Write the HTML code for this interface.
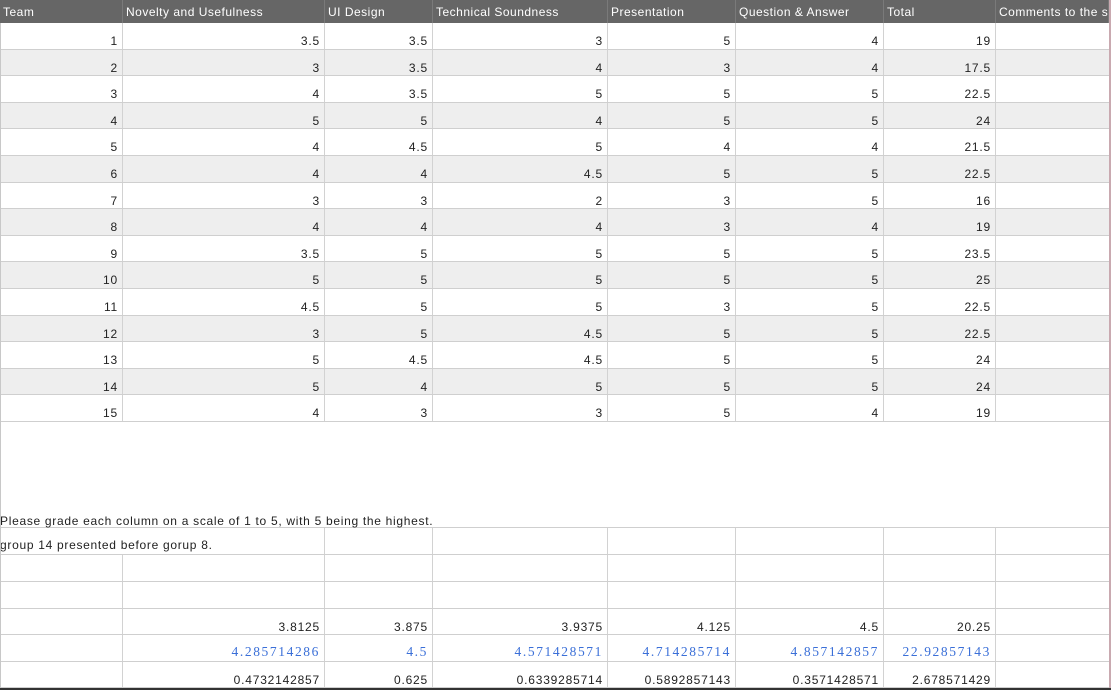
<!DOCTYPE html>
<html><head><meta charset="utf-8"><style>
*{margin:0;padding:0;box-sizing:border-box}
body{width:1111px;height:690px;overflow:hidden;background:#fff;position:relative;font-family:"Liberation Sans",Arial,sans-serif;font-size:12px;letter-spacing:0.8px;color:#222}
.r{position:absolute;left:0;width:1109px;height:26.6px;border-bottom:1px solid #cfcfcf;display:flex}
.r.g{background:#eeeeee}
.c{height:100%;border-right:1px solid #d2d2d2;text-align:right;padding:11px 4px 0 0;line-height:14px;white-space:nowrap;overflow:hidden}
.w0{width:123px}.w1{width:202px}.w2{width:108px}.w3{width:175px}.w4{width:128px}.w5{width:148px}.w6{width:112px}.w7{width:113px;border-right:none}
.h{position:absolute;left:0;top:0;width:1109px;height:23px;background:#666;display:flex;color:#fff}
.h .c{text-align:left;padding:5px 0 0 3px;border-right:1px solid #7a7a7a;font-size:12px;letter-spacing:0.5px}
.b{color:#3a6fd8;font-family:"Liberation Serif","Times New Roman",serif;font-size:13.5px;letter-spacing:1.6px;padding-top:10px}
.t{position:absolute;left:0;line-height:16px;white-space:nowrap;font-size:12px;letter-spacing:0.7px}
</style></head><body>
<div class="h"><div class="c w0">Team</div><div class="c w1">Novelty and Usefulness</div><div class="c w2">UI Design</div><div class="c w3">Technical Soundness</div><div class="c w4">Presentation</div><div class="c w5">Question &amp; Answer</div><div class="c w6">Total</div><div class="c w7">Comments to the s</div></div>

<div class="r" style="top:23px"><div class="c w0">1</div><div class="c w1">3.5</div><div class="c w2">3.5</div><div class="c w3">3</div><div class="c w4">5</div><div class="c w5">4</div><div class="c w6">19</div><div class="c w7"></div></div>
<div class="r g" style="top:49.6px"><div class="c w0">2</div><div class="c w1">3</div><div class="c w2">3.5</div><div class="c w3">4</div><div class="c w4">3</div><div class="c w5">4</div><div class="c w6">17.5</div><div class="c w7"></div></div>
<div class="r" style="top:76.2px"><div class="c w0">3</div><div class="c w1">4</div><div class="c w2">3.5</div><div class="c w3">5</div><div class="c w4">5</div><div class="c w5">5</div><div class="c w6">22.5</div><div class="c w7"></div></div>
<div class="r g" style="top:102.8px"><div class="c w0">4</div><div class="c w1">5</div><div class="c w2">5</div><div class="c w3">4</div><div class="c w4">5</div><div class="c w5">5</div><div class="c w6">24</div><div class="c w7"></div></div>
<div class="r" style="top:129.4px"><div class="c w0">5</div><div class="c w1">4</div><div class="c w2">4.5</div><div class="c w3">5</div><div class="c w4">4</div><div class="c w5">4</div><div class="c w6">21.5</div><div class="c w7"></div></div>
<div class="r g" style="top:156px"><div class="c w0">6</div><div class="c w1">4</div><div class="c w2">4</div><div class="c w3">4.5</div><div class="c w4">5</div><div class="c w5">5</div><div class="c w6">22.5</div><div class="c w7"></div></div>
<div class="r" style="top:182.6px"><div class="c w0">7</div><div class="c w1">3</div><div class="c w2">3</div><div class="c w3">2</div><div class="c w4">3</div><div class="c w5">5</div><div class="c w6">16</div><div class="c w7"></div></div>
<div class="r g" style="top:209.2px"><div class="c w0">8</div><div class="c w1">4</div><div class="c w2">4</div><div class="c w3">4</div><div class="c w4">3</div><div class="c w5">4</div><div class="c w6">19</div><div class="c w7"></div></div>
<div class="r" style="top:235.8px"><div class="c w0">9</div><div class="c w1">3.5</div><div class="c w2">5</div><div class="c w3">5</div><div class="c w4">5</div><div class="c w5">5</div><div class="c w6">23.5</div><div class="c w7"></div></div>
<div class="r g" style="top:262.4px"><div class="c w0">10</div><div class="c w1">5</div><div class="c w2">5</div><div class="c w3">5</div><div class="c w4">5</div><div class="c w5">5</div><div class="c w6">25</div><div class="c w7"></div></div>
<div class="r" style="top:289px"><div class="c w0">11</div><div class="c w1">4.5</div><div class="c w2">5</div><div class="c w3">5</div><div class="c w4">3</div><div class="c w5">5</div><div class="c w6">22.5</div><div class="c w7"></div></div>
<div class="r g" style="top:315.6px"><div class="c w0">12</div><div class="c w1">3</div><div class="c w2">5</div><div class="c w3">4.5</div><div class="c w4">5</div><div class="c w5">5</div><div class="c w6">22.5</div><div class="c w7"></div></div>
<div class="r" style="top:342.2px"><div class="c w0">13</div><div class="c w1">5</div><div class="c w2">4.5</div><div class="c w3">4.5</div><div class="c w4">5</div><div class="c w5">5</div><div class="c w6">24</div><div class="c w7"></div></div>
<div class="r g" style="top:368.8px"><div class="c w0">14</div><div class="c w1">5</div><div class="c w2">4</div><div class="c w3">5</div><div class="c w4">5</div><div class="c w5">5</div><div class="c w6">24</div><div class="c w7"></div></div>
<div class="r" style="top:395.4px"><div class="c w0">15</div><div class="c w1">4</div><div class="c w2">3</div><div class="c w3">3</div><div class="c w4">5</div><div class="c w5">4</div><div class="c w6">19</div><div class="c w7"></div></div>

<div style="position:absolute;left:0;top:422px;width:1109px;height:106px;border-bottom:1px solid #cfcfcf"></div>
<div class="t" style="top:513px">Please grade each column on a scale of 1 to 5, with 5 being the highest.</div>

<div class="r" style="top:528px;height:27px"><div class="c" style="width:325px;text-align:left;padding-left:0;padding-top:10px;border-right:1px solid #d2d2d2;letter-spacing:0.7px">group 14 presented before gorup 8.</div><div class="c w2"></div><div class="c w3"></div><div class="c w4"></div><div class="c w5"></div><div class="c w6"></div><div class="c w7"></div></div>
<div class="r" style="top:555px;height:27px"><div class="c w0"></div><div class="c w1"></div><div class="c w2"></div><div class="c w3"></div><div class="c w4"></div><div class="c w5"></div><div class="c w6"></div><div class="c w7"></div></div>
<div class="r" style="top:582px;height:26.6px"><div class="c w0"></div><div class="c w1"></div><div class="c w2"></div><div class="c w3"></div><div class="c w4"></div><div class="c w5"></div><div class="c w6"></div><div class="c w7"></div></div>
<div class="r" style="top:608.6px"><div class="c w0"></div><div class="c w1">3.8125</div><div class="c w2">3.875</div><div class="c w3">3.9375</div><div class="c w4">4.125</div><div class="c w5">4.5</div><div class="c w6">20.25</div><div class="c w7"></div></div>
<div class="r" style="top:635.2px"><div class="c w0"></div><div class="c w1 b">4.285714286</div><div class="c w2 b">4.5</div><div class="c w3 b">4.571428571</div><div class="c w4 b">4.714285714</div><div class="c w5 b">4.857142857</div><div class="c w6 b">22.92857143</div><div class="c w7"></div></div>
<div class="r" style="top:661.8px;height:26.2px"><div class="c w0"></div><div class="c w1">0.4732142857</div><div class="c w2">0.625</div><div class="c w3">0.6339285714</div><div class="c w4">0.5892857143</div><div class="c w5">0.3571428571</div><div class="c w6">2.678571429</div><div class="c w7"></div></div>

<div style="position:absolute;left:0;top:23px;width:1px;height:665px;background:#c8c8c8"></div>
<div style="position:absolute;left:1109px;top:0;width:2px;height:690px;background:#c9a9b0"></div>
<div style="position:absolute;left:0;top:688px;width:1111px;height:2px;background:#333"></div>
</body></html>
